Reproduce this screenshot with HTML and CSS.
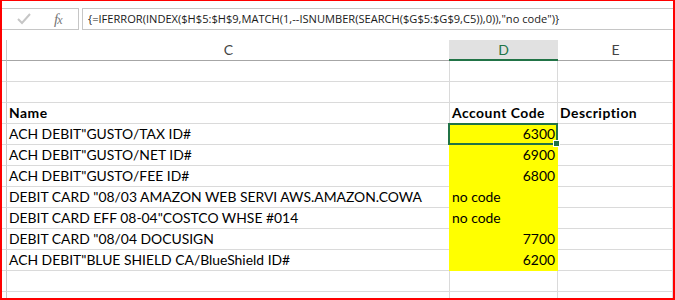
FILE: index.html
```html
<!DOCTYPE html>
<html lang="en">
<head>
    <meta charset="UTF-8">
    <title>Account codes</title>
    <link rel="stylesheet" href="styles.css">
</head>
<body>
    <div class="window">
        <div class="formula-bar">
            <div class="fx-tools">
                <svg class="tick" width="14" height="12" viewBox="0 0 14 12">
                    <polyline points="1,6 5,10 13,1" fill="none" stroke="#c6c6c6" stroke-width="2"/>
                </svg>
                <i class="fx">f<span>x</span></i>
            </div>
            <div class="formula">{=IFERROR(INDEX($H$5:$H$9,MATCH(1,--ISNUMBER(SEARCH($G$5:$G$9,C5)),0)),"no code")}</div>
        </div>

        <div class="sheet">
            <div class="corner"></div>
            <div class="head">C</div>
            <div class="head active">D</div>
            <div class="head">E</div>

            <div class="rh"></div><div class="cell"></div><div class="cell"></div><div class="cell"></div>
            <div class="rh"></div><div class="cell"></div><div class="cell"></div><div class="cell"></div>
            <div class="rh"></div><div class="cell bold">Name</div><div class="cell bold">Account Code</div><div class="cell bold">Description</div>
            <div class="rh"></div><div class="cell">ACH DEBIT"GUSTO/TAX ID#</div><div class="cell fill num sel">6300</div><div class="cell"></div>
            <div class="rh"></div><div class="cell">ACH DEBIT"GUSTO/NET ID#</div><div class="cell fill num">6900</div><div class="cell"></div>
            <div class="rh"></div><div class="cell">ACH DEBIT"GUSTO/FEE ID#</div><div class="cell fill num">6800</div><div class="cell"></div>
            <div class="rh"></div><div class="cell">DEBIT CARD "08/03 AMAZON WEB SERVI AWS.AMAZON.COWA</div><div class="cell fill">no code</div><div class="cell"></div>
            <div class="rh"></div><div class="cell">DEBIT CARD EFF 08-04"COSTCO WHSE #014</div><div class="cell fill">no code</div><div class="cell"></div>
            <div class="rh"></div><div class="cell">DEBIT CARD "08/04 DOCUSIGN</div><div class="cell fill num">7700</div><div class="cell"></div>
            <div class="rh"></div><div class="cell">ACH DEBIT"BLUE SHIELD CA/BlueShield ID#</div><div class="cell fill num">6200</div><div class="cell"></div>
            <div class="rh"></div><div class="cell"></div><div class="cell"></div><div class="cell"></div>
            <div class="rh"></div><div class="cell"></div><div class="cell"></div><div class="cell"></div>
        </div>
    </div>
</body>
</html>
```

FILE: styles.css
```css
body {
    margin: 0;
    background: #fff;
    font-family: Lato, "Liberation Sans", sans-serif;
}

/* the screenshot is framed in red */
.window {
    width: 675px;
    height: 300px;
    box-sizing: border-box;
    border: 2px solid #f00;
    border-top-width: 1px;
    overflow: hidden;
    background: #fff;
}

/* formula bar */
.formula-bar {
    display: flex;
    padding-top: 7px;
    margin-bottom: 10px;
}

.fx-tools,
.formula {
    height: 22px;
    box-sizing: border-box;
    border: 1px solid #c6c6c6;
    background: #fff;
}

.fx-tools {
    width: 78px;
    margin-left: -1px;
    display: flex;
    align-items: center;
}

.tick {
    margin-left: 15px;
}

.fx {
    margin-left: 23px;
    font-family: "Liberation Serif", serif;
    font-size: 15px;
    color: #777;
    letter-spacing: -1px;
}

.fx span {
    font-size: 12px;
}

.formula {
    flex: 1;
    margin-left: 3px;
    margin-right: -1px;
    padding-left: 5px;
    font-family: "Open Sans", sans-serif;
    font-size: 11.1px;
    line-height: 20px;
    color: #1a1a1a;
    white-space: nowrap;
    overflow: hidden;
}

/* grid */
.sheet {
    display: grid;
    grid-template-columns: 5px 443px 108px 1fr;
    grid-auto-rows: 21px;
    font-size: 13.9px;
    color: #000;
}

.corner,
.head {
    border-bottom: 1px solid #a6a6a6;
    box-sizing: border-box;
}

.corner {
    border-right: 1px solid #c8c8c8;
}

.head {
    text-align: center;
    line-height: 20px;
    font-size: 14px;
    color: #444;
}

.head.active {
    margin-left: -1px;
    background: #e1e1e1;
    color: #217346;
    border-bottom: 2px solid #217346;
}

.rh,
.cell {
    box-sizing: border-box;
    border-right: 1px solid #dadada;
    border-bottom: 1px solid #dadada;
    line-height: 20px;
    white-space: nowrap;
}

.rh {
    border-right-color: #c8c8c8;
}

.cell {
    padding: 0 2px;
}

.bold {
    font-weight: 700;
    letter-spacing: 0.5px;
}

.num {
    text-align: right;
}

/* yellow fill hides the gridlines under it */
.fill {
    margin-left: -1px;
    background: #ff0;
    border-right-color: #ff0;
    border-bottom-color: #ff0;
    padding-left: 3px;
}

/* active cell outline with fill handle */
.sel {
    position: relative;
}

.sel::after {
    content: "";
    position: absolute;
    left: -1px;
    top: -1px;
    right: -1px;
    bottom: -1px;
    border: 2px solid #217346;
}

.sel::before {
    content: "";
    position: absolute;
    right: -3px;
    bottom: -3px;
    width: 5px;
    height: 5px;
    background: #217346;
    border: 1px solid #fff;
    z-index: 1;
}
```
